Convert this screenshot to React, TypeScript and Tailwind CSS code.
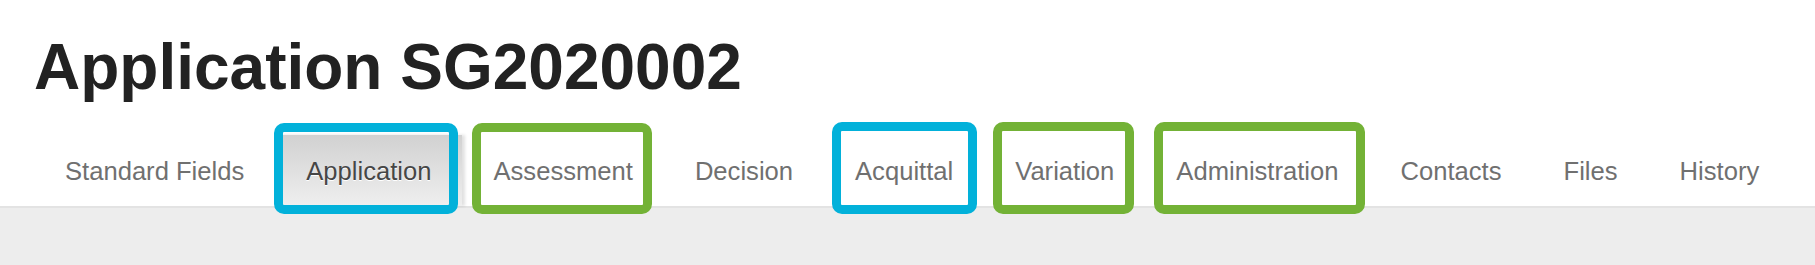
import React from "react";

type Tab = {
    label: string;
    active?: boolean;
    // annotation outline drawn over the tab
    mark?: { color: "blue" | "green"; box: string };
};

const tabs: Tab[] = [
    { label: "Standard Fields" },
    { label: "Application", active: true, mark: { color: "blue", box: "-left-[1px] right-[4px] -top-[12px] -bottom-[8px]" } },
    { label: "Assessment", mark: { color: "green", box: "left-[10px] right-[12px] -top-[12px] -bottom-[8px]" } },
    { label: "Decision" },
    { label: "Acquittal", mark: { color: "blue", box: "left-[8px] right-[7px] -top-[13px] -bottom-[8px]" } },
    { label: "Variation", mark: { color: "green", box: "left-[9px] right-[11px] -top-[13px] -bottom-[8px]" } },
    { label: "Administration", mark: { color: "green", box: "left-[9px] right-[5px] -top-[13px] -bottom-[8px]" } },
    { label: "Contacts" },
    { label: "Files" },
    { label: "History" },
];

export default function App() {
    return (
        <div className="min-h-screen flex flex-col bg-white font-['Liberation_Sans',Arial,sans-serif]">
            {/* Header */}
            <div className="pl-[34px] pt-[31px]">
                <h1 className="text-[64px] leading-[72px] font-bold text-[#222222]">Application SG2020002</h1>
            </div>

            {/* Tab bar */}
            <div className="mt-[32px] pl-[34px] flex border-b-2 border-[#e3e3e3]">
                {tabs.map((tab) => (
                    <div
                        key={tab.label}
                        className={
                            tab.active
                                ? "relative h-[71px] px-[31px] flex items-center text-[25.6px] text-[#464646] bg-gradient-to-b from-[#d1d1d1] to-[#efefef] shadow-[3px_0_3px_rgba(0,0,0,0.12)] [text-shadow:0_1px_0_#ffffff]"
                                : "relative h-[71px] px-[31px] flex items-center text-[25.6px] text-[#707070]"
                        }
                    >
                        <span className="pt-[2px]">{tab.label}</span>
                        {tab.mark && (
                            <div
                                className={
                                    "absolute border-[9px] rounded-[10px] " +
                                    tab.mark.box +
                                    (tab.mark.color === "blue" ? " border-[#02b1da]" : " border-[#73b236]")
                                }
                            />
                        )}
                    </div>
                ))}
            </div>

            {/* Content area */}
            <div className="flex-1 bg-[#ededed]" />
        </div>
    );
}
